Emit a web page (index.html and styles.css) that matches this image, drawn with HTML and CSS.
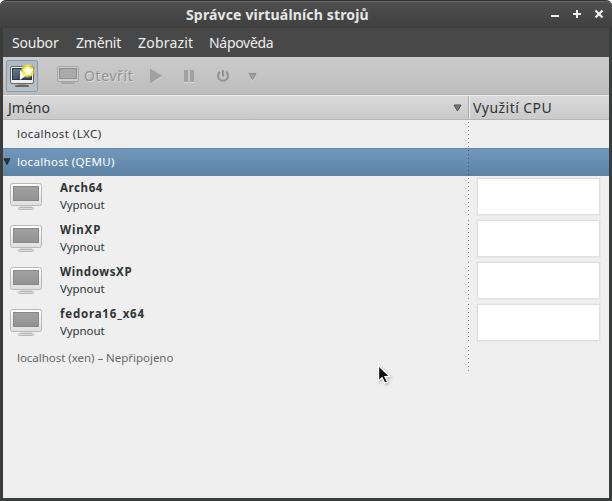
FILE: index.html
```
<!DOCTYPE html>
<html lang="cs">
<head>
<meta charset="utf-8">
<title>Správce virtuálních strojů</title>
<link rel="stylesheet" href="styles.css">
</head>
<body>
<svg class="defs" width="0" height="0">
  <defs>
    <linearGradient id="bezel" x1="0" y1="0" x2="0" y2="1"><stop offset="0" stop-color="#fff"/><stop offset="1" stop-color="#dedede"/></linearGradient>
    <linearGradient id="glass" x1="0" y1="0" x2="0" y2="1"><stop offset="0" stop-color="#a2a2a2"/><stop offset="1" stop-color="#929292"/></linearGradient>
    <linearGradient id="blue" x1="0" y1="0" x2="1" y2="1"><stop offset="0" stop-color="#6a7d94"/><stop offset="1" stop-color="#253449"/></linearGradient>
    <radialGradient id="glow"><stop offset="0" stop-color="#ffff70"/><stop offset=".6" stop-color="#f3ed21"/><stop offset="1" stop-color="#f3ed21" stop-opacity="0"/></radialGradient>
    <symbol id="monitor" viewBox="0 0 34 28">
      <path d="M11 22h10l1 2.5H10z" fill="#dadada"/>
      <rect x="8.5" y="24.5" width="15" height="2" rx="1" fill="#dedede" stroke="#b0b0b0" stroke-width=".9"/>
      <rect x=".5" y=".5" width="31" height="22" rx="2" fill="url(#bezel)" stroke="#b9b9b9"/>
      <rect x="3.5" y="3.5" width="25" height="14" fill="url(#glass)" stroke="#888"/>
    </symbol>
  </defs>
</svg>
<div class="window">
  <header class="titlebar">
    <h1>Správce virtuálních strojů</h1>
    <div class="controls">
      <svg width="54" height="14" viewBox="0 0 54 14" fill="none" stroke="#eee" stroke-width="2">
        <path d="M1 9h8M23 7h8M27 3v8"/><path d="M45.5 3.5l7 7M52.5 3.5l-7 7" stroke-width="2.2"/>
      </svg>
    </div>
  </header>
  <nav class="menubar"><span class="m1">Soubor</span><span class="m2">Změnit</span><span class="m3">Zobrazit</span><span class="m4">Nápověda</span></nav>
  <div class="toolbar">
    <button class="new">
      <svg width="30" height="30" viewBox="0 0 30 30">
        <path d="M11 22h8v3h-8z" fill="#999"/>
        <rect x="8" y="24" width="14" height="2" rx="1" fill="#666"/>
        <rect x="3.5" y="5.5" width="23" height="17" rx="1.5" fill="#eee" stroke="#666"/>
        <rect x="5.5" y="7.5" width="19" height="11" fill="url(#blue)" stroke="#26364b"/>
        <path d="M13 9l7 5-7 5z" fill="#fff"/>
        <circle cx="20.5" cy="10" r="7.5" fill="url(#glow)"/>
        <path d="M21 4.5l1.7 3.3 4 .5-2.9 2.7.7 4-3.5-1.9-3.5 1.9.7-4-2.8-2.7 3.9-.5z" fill="#fffff4"/>
      </svg>
    </button>
    <svg class="open-icon" width="22" height="19" viewBox="0 0 22 19">
      <path d="M8 14h6v3H8z" fill="#b8b8b8"/><rect x="4" y="16" width="14" height="2" rx="1" fill="#a6a6a6"/>
      <rect x=".5" y=".5" width="21" height="15" rx="1.5" fill="#cecece" stroke="#a6a6a6"/>
      <rect x="2.5" y="2.5" width="17" height="10" fill="#aaa" stroke="#8e8e8e"/>
    </svg>
    <span class="open-label">Otevřít</span>
    <svg class="actions" width="110" height="20" viewBox="0 0 110 20">
      <g fill="#dedede" transform="translate(0 1)"><path d="M0 3l12.5 7L0 17zM34 4h4v12h-4zM40 4h4v12h-4zM98.5 7h8l-4 7z"/></g>
      <g fill="#a1a1a1"><path d="M0 2.5L12.5 10 0 17.5zM34 4h4v12h-4zM40 4h4v12h-4zM98.5 7h8l-4 7z"/></g>
      <path d="M70 5.8a5 5 0 1 0 6 0M73 4v6.5" fill="none" stroke="#929292" stroke-width="2.1"/>
      <path d="M99 7.5h7l-3.5 6z" fill="#a1a1a1" stroke="#8d8d8d"/>
    </svg>
  </div>
  <div class="columns">
    <div class="name-head"><span>Jméno</span><svg width="9" height="8" viewBox="0 0 9 8"><path d="M1 1h7L4.5 7z" fill="#777" stroke="#505050"/></svg></div>
    <div class="cpu-head">Využití CPU</div>
  </div>
  <main class="tree">
    <div class="row host"><div class="cell"><span class="host-name lxc">localhost (LXC)</span></div><div class="cpu"></div></div>
    <div class="row host selected"><div class="cell"><svg class="expander" width="8" height="8" viewBox="0 0 8 8"><path d="M1 .8h6L4 6.5z" fill="#333" stroke="#202b34"/></svg><span class="host-name qemu">localhost (QEMU)</span></div><div class="cpu"></div></div>
    <div class="row vm"><div class="cell"><svg class="screen" width="34" height="28"><use href="#monitor"/></svg><div class="info"><b class="n1">Arch64</b><span>Vypnout</span></div></div><div class="cpu"><div class="graph"></div></div></div>
    <div class="row vm"><div class="cell"><svg class="screen" width="34" height="28"><use href="#monitor"/></svg><div class="info"><b class="n2">WinXP</b><span>Vypnout</span></div></div><div class="cpu"><div class="graph"></div></div></div>
    <div class="row vm"><div class="cell"><svg class="screen" width="34" height="28"><use href="#monitor"/></svg><div class="info"><b class="n3">WindowsXP</b><span>Vypnout</span></div></div><div class="cpu"><div class="graph"></div></div></div>
    <div class="row vm"><div class="cell"><svg class="screen" width="34" height="28"><use href="#monitor"/></svg><div class="info"><b class="n4">fedora16_x64</b><span>Vypnout</span></div></div><div class="cpu"><div class="graph"></div></div></div>
    <div class="row host"><div class="cell"><span class="host-name xen">localhost (xen) – Nepřipojeno</span></div><div class="cpu"></div></div>
  </main>
</div>
<svg class="pointer" width="16" height="22" viewBox="0 0 16 22"><path d="M1.5 1.5v15.5l3.6-3.3 2.7 5.6 2.8-1.3-2.6-5.3h5z" fill="#111" stroke="#fff" stroke-width="1.3"/></svg>
</body>
</html>
```
FILE: styles.css
```
* { box-sizing: border-box; }
body { margin: 0; width: 612px; height: 501px; overflow: hidden; background: #fff; font-family: "Noto Sans", sans-serif; color: #2e3436; }
.defs { position: absolute; }
svg { display: block; flex: none; }
.window { height: 501px; padding: 0 3px 3px; background: #3b3d3c; border-radius: 6px 6px 0 0; display: flex; flex-direction: column; overflow: hidden; white-space: nowrap; }
.titlebar { height: 28px; flex: none; margin: 0 -3px; display: grid; grid-template-columns: 1fr auto; background: linear-gradient(#505050, #3f3f3f); border-top: 1px solid #353535; box-shadow: inset 0 1px #6b6b6b; border-radius: 6px 6px 0 0; }
h1 { margin: 0; padding-left: 186px; font-size: 14px; line-height: 28px; font-weight: 700; color: #e6e6e6; letter-spacing: .16px; }
.controls { padding: 6px 8px 0 0; }
.menubar { height: 29px; flex: none; display: flex; padding-left: 9px; background: #484848; color: #eee; font-size: 14px; line-height: 30px; }
.m1 { width: 64px; letter-spacing: -.2px; }
.m2 { width: 62px; letter-spacing: -.2px; }
.m3 { width: 71px; letter-spacing: .2px; }
.m4 { letter-spacing: -.3px; }
.toolbar { height: 38px; flex: none; display: flex; align-items: center; padding-left: 3px; background: linear-gradient(#cbcbcb, #bdbdbd); border-bottom: 1px solid #b1b1b1; }
.new { width: 32px; height: 32px; padding: 0; border: 1px solid #7c9dbd; border-radius: 2px; background: linear-gradient(#b1b9c0, #bcc0c3); }
.open-icon { margin-left: 19px; }
.open-label { width: 66px; margin-left: 5px; font-size: 14px; color: #929292; text-shadow: 1px 1px #ddd; letter-spacing: .6px; }
.columns { height: 25px; flex: none; display: flex; background: linear-gradient(#dadada, #cacaca); border-top: 1px solid #eee; border-bottom: 1px solid #b4b4b4; font-size: 14px; line-height: 24px; }
.name-head { width: 466px; display: flex; align-items: center; justify-content: space-between; padding: 0 6px 0 5px; border-right: 1px solid #aaa; }
.cpu-head { flex: 1; padding-left: 3px; border-left: 1px solid #eee; letter-spacing: .45px; }
.tree { flex: 1; background: #efefef; font-size: 11.5px; }
.row { display: flex; }
.host { height: 28px; line-height: 28px; }
.vm { height: 42px; }
.cell { width: 465px; display: flex; }
.host .cell { padding-left: 1px; align-items: center; }
.host-name { margin-left: 13px; }
.lxc { letter-spacing: .42px; }
.qemu { letter-spacing: .32px; }
.expander { margin-left: -1px; }
.expander + .host-name { margin-left: 6px; }
.selected { background: linear-gradient(#7299bc, #5c83a6); box-shadow: inset 0 1px #6189ad; color: #fff; }
.cpu { flex: 1; background: repeating-linear-gradient(#8c8c8c 0 1px, transparent 1px 4px) 0 2px / 1px 100% no-repeat; padding: 1px 0 0 8px; }
.selected .cpu { background-image: repeating-linear-gradient(#46535e 0 1px, transparent 1px 4px); }
.graph { width: 125px; height: 39px; background: #fff; border: 2px solid #e0dedf; outline: 1px solid #eae9e9; outline-offset: -1px; }
.screen { margin: 7px 0 0 7px; }
.info { margin: 3px 0 0 16px; display: flex; flex-direction: column; line-height: 17px; }
.n1 { letter-spacing: .6px; }
.n2 { letter-spacing: .85px; }
.n3 { letter-spacing: .6px; }
.n4 { letter-spacing: .8px; }
.info span { letter-spacing: -.1px; }
.xen { color: #676767; letter-spacing: -.03px; }
.pointer { position: absolute; left: 377px; top: 364px; filter: drop-shadow(1px 1px 1px #aaa); }
```
